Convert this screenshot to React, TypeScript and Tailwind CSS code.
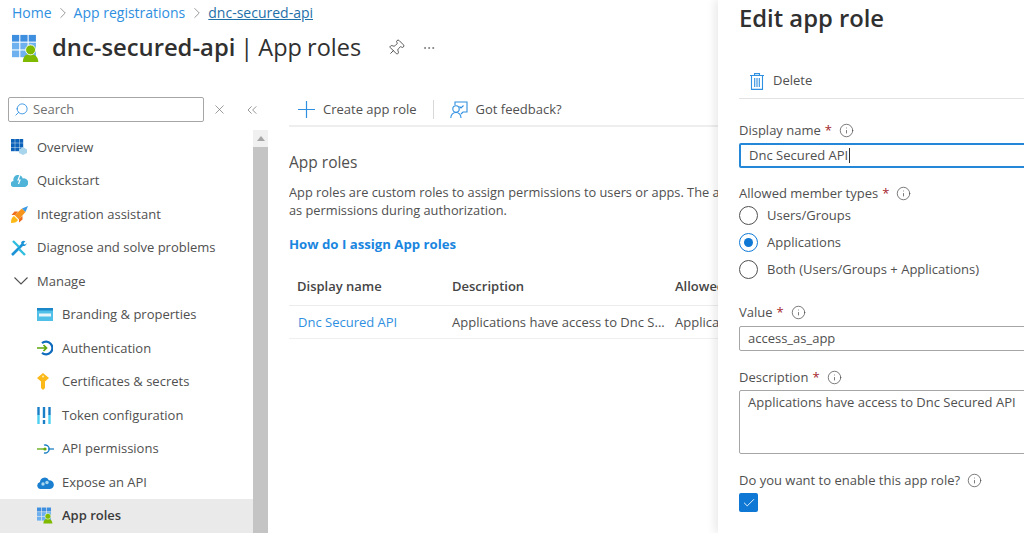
import React from 'react';
import { ChevronRight, Search, X, ChevronsLeft, Pin, Info, Check, Ellipsis } from 'lucide-react';

function AppRolesIcon({ size }: { size: number }) {
  return (
    <svg width={size} height={size} viewBox="0 0 32 32">
      {[0, 1, 2].map((r) =>
        [0, 1, 2].map((c) => (
          <rect key={`${r}-${c}`} x={c * 9.2} y={r * 8.6 + 1} width="8" height="7.4" fill={r === 0 ? '#3f8fe0' : '#6fb1ee'} />
        ))
      )}
      <path d="M12 31c0-6 3-9 8-9s9 3 9 9z" fill="#7fba00" />
      <circle cx="20.5" cy="17.5" r="5.5" fill="#7fba00" stroke="#fff" strokeWidth="1" />
    </svg>
  );
}

function OverviewIcon() {
  return (
    <svg width="16" height="16" viewBox="0 0 16 16">
      {[0, 1, 2].map((r) =>
        [0, 1, 2].map((c) => (
          <rect key={`${r}-${c}`} x={c * 4.2} y={r * 4.2} width="3.8" height="3.8" fill="#0b62b8" />
        ))
      )}
      <path d="M8 10.500l4-2.500 4 2.500v3.500l-4 2-4-2z" fill="#a8d4ec" />
    </svg>
  );
}

function CloudIcon() {
  return (
    <svg width="17" height="13" viewBox="0 0 17 13">
      <path d="M3 13A3 3 0 0 1 2.500 7 4.500 4.500 0 0 1 11.800 4.500 4.300 4.300 0 0 1 14 13z" fill="#50b4d8" />
      <path d="M9 1L7 6h2L7.500 10" stroke="#fff" strokeWidth="1.200" fill="none" />
    </svg>
  );
}

function RocketIcon() {
  return (
    <svg width="17" height="17" viewBox="0 0 17 17">
      <path d="M0 17c0-4 1-6 3-7l4 4c-1 2-3 3-7 3z" fill="#fdb813" />
      <path d="M3.500 9L11 2.500l3.500 3.500L8 13.500z" fill="#f7941d" />
      <path d="M11 2.500L17 0l-2.500 6z" fill="#3b9ae1" />
      <path d="M4 9H0.500l3-3.500H7zM8 13v3.500l3.500-3V10z" fill="#ef6c1a" />
    </svg>
  );
}

function ToolsIcon() {
  return (
    <svg width="16" height="16" viewBox="0 0 16 16">
      <path d="M1 15L12 4" stroke="#1b93d6" strokeWidth="2.600" />
      <path d="M10 2.500a3.200 3.200 0 0 1 4.400-1.200L12.600 3.200l.4 1 1.300.3 1.300-1.600A3.200 3.200 0 0 1 11.700 6z" fill="#1b93d6" />
      <path d="M2 1l6 6M8 9l6 6" stroke="#32bedd" strokeWidth="2.400" />
    </svg>
  );
}

function BrandingIcon() {
  return (
    <svg width="16" height="13" viewBox="0 0 16 13">
      <rect width="16" height="13" fill="#50c0e8" />
      <rect width="16" height="2.500" fill="#1b87c9" />
      <rect x="2" y="5.500" width="12" height="3" fill="#e8f6fc" />
    </svg>
  );
}

function AuthIcon() {
  return (
    <svg width="16" height="16" viewBox="0 0 16 16">
      <path d="M5 3.200A6.300 6.300 0 1 1 5 12.800" fill="none" stroke="#0f6cbd" strokeWidth="2.200" />
      <path d="M0 8h9M6.500 5l3 3-3 3" fill="none" stroke="#5ea80d" strokeWidth="1.700" />
    </svg>
  );
}

function KeyIcon() {
  return (
    <svg width="12" height="17" viewBox="0 0 12 17">
      <path d="M6 0l6 5-4 3.500V15l-2 2-2-2V8.500L0 5z" fill="#fbb91a" />
      <circle cx="6" cy="3.500" r="1.100" fill="#fde9a8" />
    </svg>
  );
}

function TokenIcon() {
  return (
    <svg width="14" height="17" viewBox="0 0 14 17">
      <path d="M1.500 0v8M7 0v11M12.500 0v8" stroke="#1b7fc8" strokeWidth="2.400" />
      <path d="M1.500 8v9M12.500 8v9" stroke="#50d0f0" strokeWidth="2.400" />
      <rect x="5.800" y="13" width="2.400" height="4" fill="#1b7fc8" />
    </svg>
  );
}

function ApiIcon() {
  return (
    <svg width="17" height="10" viewBox="0 0 17 10">
      <path d="M0 5h9" stroke="#5ea80d" strokeWidth="1.300" />
      <path d="M7 1.200a4 4 0 1 1 0 7.600" fill="none" stroke="#1b7fc4" strokeWidth="1.300" />
      <path d="M11 5h6" stroke="#1b7fc4" strokeWidth="1.300" />
      <circle cx="8" cy="5" r="1.600" fill="#5ea80d" />
    </svg>
  );
}

function ExposeIcon() {
  return (
    <svg width="17" height="13" viewBox="0 0 17 13">
      <path d="M3.500 13A3.500 3.500 0 0 1 3 6.100 4.700 4.700 0 0 1 12 4.400 4.300 4.300 0 0 1 13 13z" fill="#1b7fd0" />
      <circle cx="6" cy="8" r="1.700" fill="#a8d8f0" />
      <circle cx="10" cy="6.500" r="1.700" fill="#a8d8f0" />
    </svg>
  );
}

function FeedbackIcon() {
  return (
    <svg width="18" height="18" viewBox="0 0 18 18" fill="none" stroke="#2f8fe0" strokeWidth="1.100">
      <path d="M5 4V1h12v10h-4l-2 2" />
      <circle cx="6" cy="8" r="3.200" />
      <path d="M0.800 17c0-3.200 2-5.500 5.200-5.500S11 13.800 11 17" />
      <path d="M9.500 5.500l1.500 1.500 2.500-2.500" />
    </svg>
  );
}

function PlusIcon() {
  return (
    <svg width="17" height="17" viewBox="0 0 17 17" fill="none" stroke="#2f8fe0" strokeWidth="1.200">
      <path d="M8.500 0v17M0 8.500h17" />
    </svg>
  );
}

function TrashIcon() {
  return (
    <svg width="14" height="17" viewBox="0 0 14 17" fill="none" stroke="#2f8fe0" strokeWidth="1.100">
      <path d="M0 2.500h14M4.500 2.500V.6h5v1.900" />
      <path d="M1.500 2.500v13.900h11V2.500" />
      <path d="M4.700 5v9M7 5v9M9.300 5v9" />
    </svg>
  );
}

function ManageChevron() {
  return (
    <svg width="14" height="8" viewBox="0 0 14 8" fill="none" stroke="#505050" strokeWidth="1.100">
      <path d="M.5.500L7 7l6.500-6.500" />
    </svg>
  );
}

function TopItem({ icon, label }: { icon: React.ReactNode; label: string }) {
  return (
    <div className="flex h-[33.5px] items-center text-[13px] text-[#505050]">
      <div className="ml-[11px] flex w-[26px] shrink-0 items-center">{icon}</div>
      <span>{label}</span>
    </div>
  );
}

function SubItem({ icon, label, active }: { icon: React.ReactNode; label: string; active?: boolean }) {
  return (
    <div className={`flex h-[33.5px] items-center text-[13px] ${active ? 'bg-[#ebeaea] font-semibold text-[#3a3a3a]' : 'text-[#505050]'}`}>
      <div className="ml-[37px] flex w-[25px] shrink-0 items-center">{icon}</div>
      <span>{label}</span>
    </div>
  );
}

function FieldLabel({ label, required }: { label: string; required?: boolean }) {
  return (
    <div className="flex items-center text-[13px] leading-[18px] text-[#505050]">
      <span>{label}</span>
      {required && <span className="ml-[4px] text-[#a4262c]">*</span>}
      <Info className="ml-[7px] h-[15px] w-[15px] text-[#505050]" strokeWidth={1.2} />
    </div>
  );
}

function Radio({ label, checked }: { label: string; checked?: boolean }) {
  return (
    <div className="flex h-[27px] items-center text-[13px] text-[#505050]">
      <div className={`flex h-[19px] w-[19px] items-center justify-center rounded-full border ${checked ? 'border-[#0f7ad8]' : 'border-[#505050]'}`}>
        {checked && <div className="h-[9px] w-[9px] rounded-full bg-[#0f78d4]" />}
      </div>
      <span className="ml-[9px]">{label}</span>
    </div>
  );
}

export default function App() {
  return (
    <div className="relative h-[533px] w-[1024px] overflow-hidden bg-white font-['Open_Sans',sans-serif]">
      {/* Breadcrumb */}
      <div className="flex h-[25px] items-center pl-[12px] text-[14px] text-[#2f8fe0]">
        <span>Home</span>
        <ChevronRight className="mx-[2px] h-[18px] w-[18px] text-[#777]" strokeWidth={1} />
        <span>App registrations</span>
        <ChevronRight className="mx-[2.5px] h-[18px] w-[18px] text-[#777]" strokeWidth={1} />
        <span className="text-[#1f6fa8] underline">dnc-secured-api</span>
      </div>

      {/* Title */}
      <div className="flex h-[46px] items-center pl-[12px]">
        <AppRolesIcon size={29} />
        <div className="ml-[11px] text-[23.8px] font-semibold text-[#303030]">dnc-secured-api</div>
        <div className="ml-[5px] text-[23.5px] text-[#303030] [word-spacing:-1px]">| App roles</div>
        <Pin className="ml-[26px] h-[18px] w-[18px] rotate-45 text-[#404040]" strokeWidth={1.1} />
        <Ellipsis className="ml-[17px] h-[14px] w-[14px] text-[#606060]" strokeWidth={1.2} />
      </div>

      <div className="flex">
        {/* Sidebar */}
        <div className="mt-[26px] w-[268px] shrink-0">
          <div className="flex h-[25px] items-center pl-[8px]">
            <div className="flex h-[25px] w-[196px] items-center rounded-[2px] border border-[#a6a6a6] pl-[5px]">
              <Search className="h-[15px] w-[15px] -scale-x-100 text-[#2f8fe0]" strokeWidth={1.4} />
              <span className="ml-[4px] text-[13px] text-[#707070]">Search</span>
            </div>
            <X className="ml-[8px] h-[15px] w-[15px] text-[#707070]" strokeWidth={1.1} />
            <ChevronsLeft className="ml-[17px] h-[16px] w-[16px] text-[#707070]" strokeWidth={1.1} />
          </div>
          <div className="mt-[8px] flex">
            <div className="w-[253px] pt-[0.5px]">
              <TopItem icon={<OverviewIcon />} label="Overview" />
              <TopItem icon={<CloudIcon />} label="Quickstart" />
              <TopItem icon={<RocketIcon />} label="Integration assistant" />
              <TopItem icon={<ToolsIcon />} label="Diagnose and solve problems" />
              <TopItem icon={<div className="ml-[3px]"><ManageChevron /></div>} label="Manage" />
              <SubItem icon={<BrandingIcon />} label="Branding & properties" />
              <SubItem icon={<AuthIcon />} label="Authentication" />
              <SubItem icon={<KeyIcon />} label="Certificates & secrets" />
              <SubItem icon={<TokenIcon />} label="Token configuration" />
              <SubItem icon={<ApiIcon />} label="API permissions" />
              <SubItem icon={<ExposeIcon />} label="Expose an API" />
              <SubItem icon={<AppRolesIcon size={17} />} label="App roles" active />
            </div>
            <div className="w-[15px] shrink-0 bg-[#c4c4c4]">
              <div className="flex h-[17px] items-center justify-center bg-[#f0f0f0]">
                <div className="h-0 w-0 border-x-[4px] border-b-[5px] border-x-transparent border-b-[#a6a6a6]" />
              </div>
            </div>
          </div>
        </div>

        {/* Main content, cut off where the blade starts */}
        <div className="ml-[21px] w-[429px] shrink-0 overflow-hidden">
          <div className="mt-[13px] flex h-[43px] items-center border-b-2 border-[#eeeeee] pl-[9px] pt-[10px] text-[13px] text-[#505050]">
            <PlusIcon />
            <span className="ml-[8px]">Create app role</span>
            <div className="mx-[16px] h-[19px] w-px bg-[#d8d8d8]" />
            <FeedbackIcon />
            <span className="ml-[8px]">Got feedback?</span>
          </div>
          <div className="mt-[24px] text-[15.5px] leading-[22px] text-[#505050]">App roles</div>
          <div className="mt-[10px] whitespace-nowrap text-[12.8px] leading-[18px] text-[#505050]">
            App roles are custom roles to assign permissions to users or apps. The app defines these roles
            <br />
            as permissions during authorization.
          </div>
          <div className="mt-[16px] text-[13.2px] font-bold leading-[18px] text-[#1a86e0]">How do I assign App roles</div>
          <div className="mt-[15px] flex h-[38px] items-center border-b border-[#ececec] text-[13px] font-semibold text-[#454545]">
            <span className="ml-[8px] w-[155px] shrink-0">Display name</span>
            <span className="w-[223px] shrink-0">Description</span>
            <span className="whitespace-nowrap">Allowed member types</span>
          </div>
          <div className="flex h-[33px] items-center border-b border-[#f0f0f0] pt-[2px] text-[13px] text-[#505050]">
            <span className="ml-[9px] w-[154px] shrink-0 text-[#2f8fe0]">Dnc Secured API</span>
            <span className="w-[223px] shrink-0 whitespace-nowrap">Applications have access to Dnc S...</span>
            <span className="whitespace-nowrap">Applications</span>
          </div>
        </div>
      </div>

      {/* Edit blade */}
      <div className="absolute left-[718px] top-0 h-[533px] w-[420px] bg-white pl-[21px] shadow-[-4px_0_8px_rgba(0,0,0,0.08)]">
        <div className="mt-[2px] text-[23.8px] font-semibold leading-[32px] text-[#303030]">Edit app role</div>
        <div className="mt-[30px] flex h-[35px] items-center border-b border-[#e2e2e2] pl-[11px] text-[13px] text-[#505050]">
          <TrashIcon />
          <span className="ml-[9px]">Delete</span>
        </div>
        <div className="mt-[22px]">
          <FieldLabel label="Display name" required />
        </div>
        <div className="mt-[4px] flex h-[25px] items-center rounded-[2px] border-2 border-[#2487d8] pl-[8px] text-[13px] text-[#505050]">
          Dnc Secured API<span className="ml-[1px] h-[15px] w-px bg-[#303030]" />
        </div>
        <div className="mt-[16px]">
          <FieldLabel label="Allowed member types" required />
        </div>
        <Radio label="Users/Groups" />
        <Radio label="Applications" checked />
        <Radio label="Both (Users/Groups + Applications)" />
        <div className="mt-[20px]">
          <FieldLabel label="Value" required />
        </div>
        <div className="mt-[5px] flex h-[25px] items-center rounded-[2px] border border-[#a6a6a6] pl-[8px] text-[13px] text-[#505050]">
          access_as_app
        </div>
        <div className="mt-[17px]">
          <FieldLabel label="Description" required />
        </div>
        <div className="mt-[4px] h-[64px] rounded-[2px] border border-[#a6a6a6] pl-[8px] pt-[2px] text-[13px] leading-[18px] text-[#505050]">
          Applications have access to Dnc Secured API
        </div>
        <div className="mt-[17px]">
          <FieldLabel label="Do you want to enable this app role?" />
        </div>
        <div className="mt-[4px] flex h-[19px] w-[19px] items-center justify-center rounded-[2px] bg-[#0f78d4]">
          <Check className="h-[14px] w-[14px] text-white" strokeWidth={1.5} />
        </div>
      </div>
    </div>
  );
}
